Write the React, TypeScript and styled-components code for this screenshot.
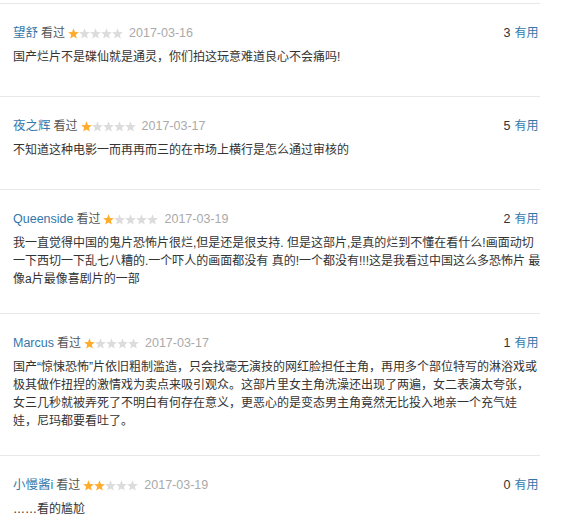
import React from "react";
import styled, { createGlobalStyle } from "styled-components";

const Global = createGlobalStyle`
  html, body { margin: 0; padding: 0; background: #fff; }
  body { font-family: "Liberation Sans", Arial, "Noto Sans CJK SC", sans-serif; }
`;

const List = styled.div`
  width: 540px;
  padding-top: 3px;
`;

const Item = styled.div`
  border-top: 1px solid #e8e8e8;
  padding: 19px 1.5px 25px 13px;
`;

const Info = styled.div`
  display: flex;
  align-items: center;
  height: 20px;
  font-size: 12px;
  line-height: 20px;
`;

const Name = styled.span`
  color: #3377aa;
  font-size: 12.5px;
`;

const Seen = styled.span`
  color: #555;
  margin-left: 3px;
`;

const Stars = styled.span`
  display: inline-flex;
  margin-left: 3px;
`;

const Date = styled.span`
  color: #aaa;
  margin-left: 6px;
  font-size: 12.5px;
`;

const Votes = styled.span`
  margin-left: auto;
  color: #333;
  font-size: 12.5px;
`;

const Useful = styled.span`
  color: #3377aa;
  margin-left: 4px;
  font-size: 12px;
`;

const Content = styled.p`
  margin: 5px 0 0;
  width: 527.5px;
  min-height: 23px;
  font-size: 12px;
  line-height: 18px;
  color: #333;
`;

const Star = ({ on }: { on: boolean }) => (
  <svg width="11" height="11" viewBox="0 0 11 11">
    <polygon
      points="5.5,0.3 6.91,4.06 10.92,4.24 7.78,6.74 8.85,10.61 5.5,8.4 2.15,10.61 3.22,6.74 0.08,4.24 4.09,4.06"
      fill={on ? "#ffac2d" : "#dcdcdc"}
    />
  </svg>
);

type Review = {
  name: string;
  stars: number;
  date: string;
  votes: number;
  text: string;
};

const reviews: Review[] = [
  {
    name: "望舒",
    stars: 1,
    date: "2017-03-16",
    votes: 3,
    text: "国产烂片不是碟仙就是通灵，你们拍这玩意难道良心不会痛吗!",
  },
  {
    name: "夜之辉",
    stars: 1,
    date: "2017-03-17",
    votes: 5,
    text: "不知道这种电影一而再再而三的在市场上横行是怎么通过审核的",
  },
  {
    name: "Queenside",
    stars: 1,
    date: "2017-03-19",
    votes: 2,
    text: "我一直觉得中国的鬼片恐怖片很烂,但是还是很支持. 但是这部片,是真的烂到不懂在看什么!画面动切一下西切一下乱七八糟的.一个吓人的画面都没有 真的!一个都没有!!!这是我看过中国这么多恐怖片 最像a片最像喜剧片的一部",
  },
  {
    name: "Marcus",
    stars: 1,
    date: "2017-03-17",
    votes: 1,
    text: "国产“惊悚恐怖”片依旧粗制滥造，只会找毫无演技的网红脸担任主角，再用多个部位特写的淋浴戏或极其做作扭捏的激情戏为卖点来吸引观众。这部片里女主角洗澡还出现了两遍，女二表演太夸张，女三几秒就被弄死了不明白有何存在意义，更恶心的是变态男主角竟然无比投入地亲一个充气娃娃，尼玛都要看吐了。",
  },
  {
    name: "小慢酱i",
    stars: 2,
    date: "2017-03-19",
    votes: 0,
    text: "……看的尴尬",
  },
];

export default function App() {
  return (
    <>
      <Global />
      <List>
        {reviews.map((r) => (
          <Item key={r.name}>
            <Info>
              <Name>{r.name}</Name>
              <Seen>看过</Seen>
              <Stars>
                {[0, 1, 2, 3, 4].map((i) => (
                  <Star key={i} on={i < r.stars} />
                ))}
              </Stars>
              <Date>{r.date}</Date>
              <Votes>
                {r.votes}
                <Useful>有用</Useful>
              </Votes>
            </Info>
            <Content>{r.text}</Content>
          </Item>
        ))}
      </List>
    </>
  );
}
